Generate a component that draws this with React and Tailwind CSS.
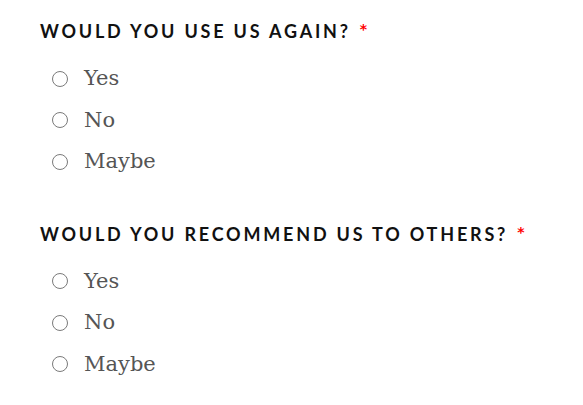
import { useState } from 'react';

const questions = [
  { id: 'again', label: 'WOULD YOU USE US AGAIN?' },
  { id: 'recommend', label: 'WOULD YOU RECOMMEND US TO OTHERS?' },
];
const options = ['Yes', 'No', 'Maybe'];

function Radio({ checked }) {
  return (
    <span className="w-[16px] h-[16px] rounded-full border border-[#7a7a7a] bg-white flex items-center justify-center shrink-0">
      {checked && <span className="w-[8px] h-[8px] rounded-full bg-[#444]" />}
    </span>
  );
}

export default function App() {
  const [answers, setAnswers] = useState({});

  return (
    <div className="w-[583px] h-[405px] bg-white pl-[40px] pt-[19px]">
      {questions.map((q, i) => (
        <fieldset key={q.id} className={i > 0 ? 'mt-[39px]' : ''}>
          <legend className="flex items-start text-[18px] leading-[24px] font-bold tracking-[2.8px] text-[#111] font-['Lato',sans-serif]">
            {q.label}
            <span className="text-[#ff0000] text-[14px] leading-[14px] ml-[9px] mt-[3px] tracking-normal font-['DejaVu_Sans',sans-serif]">*</span>
          </legend>
          <div className="mt-[15px] flex flex-col">
            {options.map((opt) => (
              <label
                key={opt}
                onClick={() => setAnswers({ ...answers, [q.id]: opt })}
                className="h-[41.5px] flex items-center pl-[12px] gap-[16px] cursor-pointer"
              >
                <Radio checked={answers[q.id] === opt} />
                <span className="text-[21px] text-[#555] font-['DejaVu_Serif',serif]">{opt}</span>
              </label>
            ))}
          </div>
        </fieldset>
      ))}
    </div>
  );
}
